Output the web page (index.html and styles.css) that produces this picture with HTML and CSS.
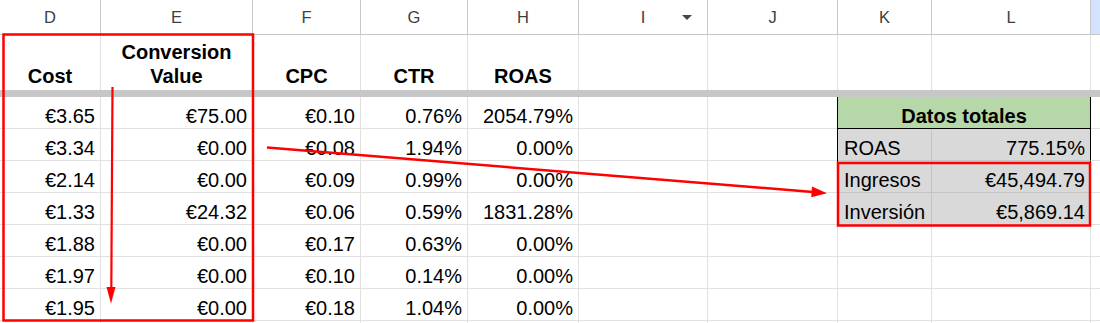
FILE: index.html
```html
<!DOCTYPE html>
<html lang="es">
<head>
<meta charset="utf-8">
<title>Sheet</title>
<link rel="stylesheet" href="styles.css">
</head>
<body>
<div class="page">
  <div class="sheet">
    <!-- column headers -->
    <div class="h">D</div>
    <div class="h">E</div>
    <div class="h">F</div>
    <div class="h">G</div>
    <div class="h">H</div>
    <div class="h h-menu">I<span class="caret"></span></div>
    <div class="h">J</div>
    <div class="h">K</div>
    <div class="h">L</div>
    <div class="h h-sel"></div>

    <!-- row 1 titles -->
    <div class="t">Cost</div>
    <div class="t">Conversion<br>Value</div>
    <div class="t">CPC</div>
    <div class="t">CTR</div>
    <div class="t">ROAS</div>
    <div class="t"></div>
    <div class="t"></div>
    <div class="t"></div>
    <div class="t"></div>
    <div class="t"></div>

    <div class="freeze"></div>

    <!-- data row 1 -->
    <div class="c">€3.65</div><div class="c">€75.00</div><div class="c">€0.10</div><div class="c">0.76%</div><div class="c">2054.79%</div><div class="c"></div><div class="c"></div>
    <div class="c k-green">Datos totales</div><div class="c"></div>

    <!-- data row 2 -->
    <div class="c">€3.34</div><div class="c">€0.00</div><div class="c">€0.08</div><div class="c">1.94%</div><div class="c">0.00%</div><div class="c"></div><div class="c"></div>
    <div class="c k-lab">ROAS</div><div class="c k-val">775.15%</div><div class="c"></div>

    <!-- data row 3 -->
    <div class="c">€2.14</div><div class="c">€0.00</div><div class="c">€0.09</div><div class="c">0.99%</div><div class="c">0.00%</div><div class="c"></div><div class="c"></div>
    <div class="c k-lab">Ingresos</div><div class="c k-val">€45,494.79</div><div class="c"></div>

    <!-- data row 4 -->
    <div class="c">€1.33</div><div class="c">€24.32</div><div class="c">€0.06</div><div class="c">0.59%</div><div class="c">1831.28%</div><div class="c"></div><div class="c"></div>
    <div class="c k-lab">Inversión</div><div class="c k-val">€5,869.14</div><div class="c"></div>

    <!-- data row 5 -->
    <div class="c">€1.88</div><div class="c">€0.00</div><div class="c">€0.17</div><div class="c">0.63%</div><div class="c">0.00%</div><div class="c"></div><div class="c"></div><div class="c"></div><div class="c"></div><div class="c"></div>

    <!-- data row 6 -->
    <div class="c">€1.97</div><div class="c">€0.00</div><div class="c">€0.10</div><div class="c">0.14%</div><div class="c">0.00%</div><div class="c"></div><div class="c"></div><div class="c"></div><div class="c"></div><div class="c"></div>

    <!-- data row 7 -->
    <div class="c">€1.95</div><div class="c">€0.00</div><div class="c">€0.18</div><div class="c">1.04%</div><div class="c">0.00%</div><div class="c"></div><div class="c"></div><div class="c"></div><div class="c"></div><div class="c"></div>

    <!-- data row 8 (partially visible) -->
    <div class="c"></div><div class="c"></div><div class="c"></div><div class="c"></div><div class="c"></div><div class="c"></div><div class="c"></div><div class="c"></div><div class="c"></div><div class="c"></div>
  </div>

  <svg class="marks" width="1100" height="323" viewBox="0 0 1100 323" aria-hidden="true">
    <rect x="3.5" y="34.5" width="249.5" height="286" fill="none" stroke="#ff0000" stroke-width="2.5"/>
    <rect x="838" y="163" width="252" height="62.5" fill="none" stroke="#ff0000" stroke-width="2.5"/>
    <line x1="112.5" y1="87" x2="111.3" y2="289" stroke="#ff0000" stroke-width="2.2"/>
    <polygon points="106.5,287 115.5,287 111,303.5" fill="#ff0000"/>
    <line x1="267" y1="147.5" x2="813" y2="192" stroke="#ff0000" stroke-width="2.5"/>
    <polygon points="812,186.5 811.2,197.3 827,193.2" fill="#ff0000"/>
  </svg>
</div>
</body>
</html>
```

FILE: styles.css
```css
html, body {
  margin: 0;
  padding: 0;
  background: #ffffff;
  overflow: hidden;
}

.page {
  position: relative;
  width: 1100px;
  height: 323px;
  overflow: hidden;
  font-family: "Liberation Sans", Arial, sans-serif;
  color: #000000;
}

.sheet {
  display: grid;
  grid-template-columns: 101px 152px 108px 107px 111px 129px 130px 94px 159px 30px;
  grid-template-rows: 35px 55px 7px repeat(8, 32px);
  width: 1121px;
}

/* column header */
.h {
  box-sizing: border-box;
  border-right: 1px solid #c7c7c7;
  border-bottom: 1px solid #c7c7c7;
  display: flex;
  align-items: center;
  justify-content: center;
  font-size: 16.5px;
  color: #3c4043;
  padding-top: 1px;
  position: relative;
}

.h-sel {
  background: #d3e3fd;
}

.caret {
  position: absolute;
  right: 15px;
  top: 15px;
  width: 0;
  height: 0;
  border-left: 5.5px solid transparent;
  border-right: 5.5px solid transparent;
  border-top: 5.5px solid #444746;
}

/* title row */
.t {
  box-sizing: border-box;
  border-right: 1px solid #e1e1e1;
  display: flex;
  align-items: flex-end;
  justify-content: center;
  text-align: center;
  font-weight: bold;
  font-size: 20px;
  line-height: 24px;
  padding-bottom: 2px;
}

.freeze {
  grid-column: 1 / -1;
  background: #c7c7c7;
}

/* data cells */
.c {
  box-sizing: border-box;
  border-right: 1px solid #e1e1e1;
  border-bottom: 1px solid #e1e1e1;
  display: flex;
  align-items: flex-end;
  justify-content: flex-end;
  padding-right: 5px;
  font-size: 20px;
  line-height: 23px;
  white-space: nowrap;
  overflow: hidden;
}

/* totals table */
.k-green {
  grid-column: span 2;
  background: #b6d7a8;
  justify-content: center;
  font-weight: bold;
  padding-right: 0;
  border-right: 1px solid #000000;
  border-bottom: 1px solid #000000;
  box-shadow: -1px 0 0 #000000;
}

.k-lab {
  background: #d9d9d9;
  justify-content: flex-start;
  padding-left: 6px;
  border-right-color: #c4c4c4;
  border-bottom-color: #c4c4c4;
  box-shadow: -1px 0 0 #000000;
}

.k-val {
  background: #d9d9d9;
  border-right-color: #000000;
  border-bottom-color: #c4c4c4;
}

.marks {
  position: absolute;
  top: 0;
  left: 0;
  pointer-events: none;
}
```
